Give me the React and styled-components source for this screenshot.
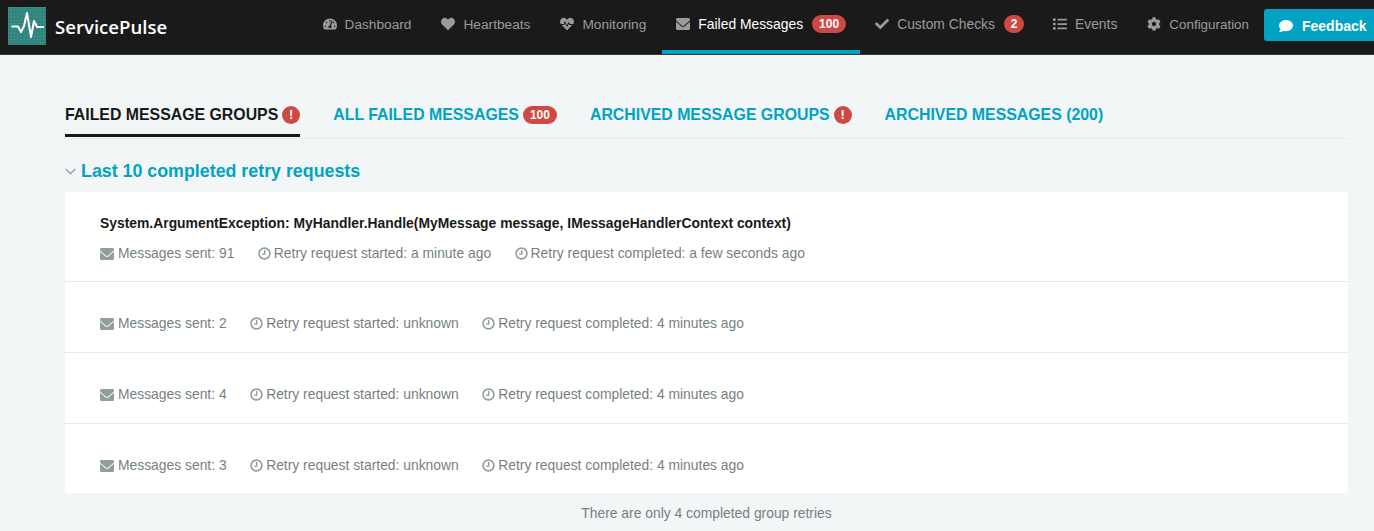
import React from "react";
import styled, { createGlobalStyle } from "styled-components";
import {
  FaTachometerAlt,
  FaHeart,
  FaHeartbeat,
  FaEnvelope,
  FaCheck,
  FaList,
  FaCog,
  FaComment,
} from "react-icons/fa";

const GlobalStyle = createGlobalStyle`
  html, body {
    margin: 0;
    padding: 0;
    height: 100%;
    overflow: hidden;
    background-color: #f2f6f7;
    font-family: "Liberation Sans", Arial, sans-serif;
    font-size: 13.87px;
    color: #181919;
  }
`;

const Header = styled.header`
  display: flex;
  align-items: stretch;
  height: 54px;
  width: 1374px;
  background-color: #1a1a1a;
  border-bottom: 1px solid #3a3a3a;
  overflow: hidden;
`;
const Brand = styled.div`
  display: flex;
  align-items: center;
  gap: 9px;
  padding-left: 8px;
  margin-right: auto;
  margin-bottom: 2px;
`;
const BrandName = styled.span`
  font-family: "Open Sans", sans-serif;
  font-size: 18.6px;
  font-weight: 600;
  color: #fff;
`;
const Nav = styled.nav`
  display: flex;
  align-items: stretch;
`;
const Badge = styled.span`
  display: inline-flex;
  align-items: center;
  justify-content: center;
  height: 18px;
  min-width: 20px;
  padding: ${(props) => (props.$wide ? "0 7px" : "0")};
  box-sizing: border-box;
  border-radius: 9px;
  background-color: #ce4844;
  color: #fff;
  font-size: 12px;
  font-weight: bold;
`;
const NavItem = styled.div`
  display: flex;
  align-items: center;
  gap: 8px;
  padding: 0 15px 2px ${(props) => (props.$active ? "14px" : "15px")};
  margin-left: ${(props) => (props.$active ? "1px" : "0")};
  font-size: ${(props) => props.$size}px;
  color: ${(props) => (props.$active ? "#fff" : "#9a9a9a")};
  border-bottom: 4px solid ${(props) => (props.$active ? "#00a3c4" : "transparent")};
  svg {
    color: #9a9a9a;
    font-size: 14px;
  }
  ${Badge} {
    margin: 0 -1px 0 1px;
  }
`;
const FeedbackButton = styled.button`
  align-self: flex-start;
  display: flex;
  align-items: center;
  gap: 9px;
  flex-shrink: 0;
  width: 110px;
  height: 32px;
  margin-top: 9px;
  padding: 1px 0 0 15px;
  border: none;
  border-radius: 3px 0 0 3px;
  background-color: #00a3c4;
  color: #fff;
  font-family: inherit;
  font-size: 14px;
  font-weight: bold;
`;

const Main = styled.main`
  padding: 41px 26px 0 65px;
`;
const Tabs = styled.div`
  display: flex;
  gap: 33px;
  height: 42px;
  border-bottom: 1px solid #e5eaec;
`;
const Tab = styled.div`
  display: flex;
  align-items: flex-start;
  gap: 4px;
  height: 41px;
  padding-top: 10px;
  box-sizing: border-box;
  font-size: 15.87px;
  line-height: 18px;
  font-weight: bold;
  text-transform: uppercase;
  color: ${(props) => (props.$active ? "#181919" : "#00a3c4")};
  ${(props) => props.$active && "border-bottom: 3px solid #181919;"}
`;
const AlertDot = styled.span`
  display: inline-flex;
  align-items: center;
  justify-content: center;
  width: 18px;
  height: 18px;
  border-radius: 50%;
  background-color: #ce4844;
  color: #fff;
  font-size: 13px;
`;
const SectionTitle = styled.h2`
  display: flex;
  align-items: center;
  gap: 5px;
  margin: 22px 0 10px;
  font-size: 17.82px;
  line-height: 21px;
  font-weight: bold;
  color: #00a3c4;
`;
const RetryList = styled.div`
  background-color: #fff;
`;
const RetryRow = styled.div`
  height: ${(props) => props.$height}px;
  box-sizing: border-box;
  padding: ${(props) => (props.$hasTitle ? "22px" : "33px")} 35px 0;
  border-bottom: ${(props) => (props.$last ? "none" : "1px solid #e5eaec")};
`;
const RetryTitle = styled.div`
  font-size: 13.88px;
  line-height: 18px;
  font-weight: bold;
  color: #181919;
  margin-bottom: 13px;
`;
const Meta = styled.div`
  display: flex;
  gap: 23.5px;
  line-height: 17px;
  color: #777f7f;
`;
const MetaItem = styled.span`
  display: inline-flex;
  align-items: center;
  gap: ${(props) => props.$gap}px;
  svg {
    color: #929e9e;
  }
`;
const Footnote = styled.p`
  margin: 12px 0 0;
  text-align: center;
  line-height: 16px;
  color: #777f7f;
`;
// the FA4 envelope is taller than the FA5 one
const EnvelopeIcon = styled(FaEnvelope).attrs({ preserveAspectRatio: "none" })`
  width: 14px;
  height: 16px;
`;

const Logo = () => (
  <svg width="38" height="38" viewBox="0 0 38 38">
    <defs>
      <pattern id="logoGrid" width="3.2" height="3.2" patternUnits="userSpaceOnUse">
        <path d="M3.2 0H0V3.2" fill="none" stroke="#4d9e96" strokeWidth="0.6" />
      </pattern>
    </defs>
    <rect width="38" height="38" fill="#2e827c" />
    <rect width="38" height="38" fill="url(#logoGrid)" />
    <path
      d="M3.5 19.5H10L13 25L16 19L19 6L23 30L26 14L29 20H36"
      fill="none"
      stroke="#fff"
      strokeWidth="2"
      strokeLinejoin="round"
    />
  </svg>
);

// FontAwesome 4 clock-o is heavier than the FA5 regular one
const ClockIcon = () => (
  <svg width="13" height="13" viewBox="0 0 12 12">
    <circle cx="6" cy="6" r="5" fill="none" stroke="currentColor" strokeWidth="1.5" />
    <path d="M6.2 2.8V6.6H3.6" fill="none" stroke="currentColor" strokeWidth="1.3" />
  </svg>
);

const Chevron = () => (
  <svg width="11" height="7" viewBox="0 0 11 7">
    <path d="M0.7 0.9L5.5 5.7L10.3 0.9" fill="none" stroke="#8b9599" strokeWidth="1.3" />
  </svg>
);

const navItems = [
  { label: "Dashboard", Icon: FaTachometerAlt, size: 13.7 },
  { label: "Heartbeats", Icon: FaHeart, size: 13.7 },
  { label: "Monitoring", Icon: FaHeartbeat, size: 13.7 },
  { label: "Failed Messages", Icon: EnvelopeIcon, size: 13.87, badge: "100", active: true },
  { label: "Custom Checks", Icon: FaCheck, size: 13.87, badge: "2" },
  { label: "Events", Icon: FaList, size: 13.87 },
  { label: "Configuration", Icon: FaCog, size: 13.4 },
];

const retries = [
  {
    title:
      "System.ArgumentException: MyHandler.Handle(MyMessage message, IMessageHandlerContext context)",
    sent: 91,
    started: "a minute ago",
    completed: "a few seconds ago",
    height: 90,
  },
  { sent: 2, started: "unknown", completed: "4 minutes ago", height: 71 },
  { sent: 4, started: "unknown", completed: "4 minutes ago", height: 71 },
  { sent: 3, started: "unknown", completed: "4 minutes ago", height: 69, last: true },
];

const App = () => {
  return (
    <>
      <GlobalStyle />
      <Header>
        <Brand>
          <Logo />
          <BrandName>ServicePulse</BrandName>
        </Brand>
        <Nav>
          {navItems.map(({ label, Icon, size, badge, active }) => (
            <NavItem key={label} $size={size} $active={active}>
              <Icon />
              {label}
              {badge && <Badge $wide={badge.length > 1}>{badge}</Badge>}
            </NavItem>
          ))}
        </Nav>
        <FeedbackButton>
          <FaComment />
          Feedback
        </FeedbackButton>
      </Header>
      <Main>
        <Tabs>
          <Tab $active>
            Failed Message Groups
            <AlertDot>!</AlertDot>
          </Tab>
          <Tab>
            All Failed Messages
            <Badge $wide>100</Badge>
          </Tab>
          <Tab>
            Archived Message Groups
            <AlertDot>!</AlertDot>
          </Tab>
          <Tab>Archived Messages (200)</Tab>
        </Tabs>
        <SectionTitle>
          <Chevron />
          Last 10 completed retry requests
        </SectionTitle>
        <RetryList>
          {retries.map((retry, i) => (
            <RetryRow key={i} $hasTitle={!!retry.title} $height={retry.height} $last={retry.last}>
              {retry.title && <RetryTitle>{retry.title}</RetryTitle>}
              <Meta>
                <MetaItem $gap={4}>
                  <EnvelopeIcon />
                  Messages sent: {retry.sent}
                </MetaItem>
                <MetaItem $gap={3}>
                  <ClockIcon />
                  Retry request started: {retry.started}
                </MetaItem>
                <MetaItem $gap={3}>
                  <ClockIcon />
                  Retry request completed: {retry.completed}
                </MetaItem>
              </Meta>
            </RetryRow>
          ))}
        </RetryList>
        <Footnote>There are only 4 completed group retries</Footnote>
      </Main>
    </>
  );
};

export default App;
